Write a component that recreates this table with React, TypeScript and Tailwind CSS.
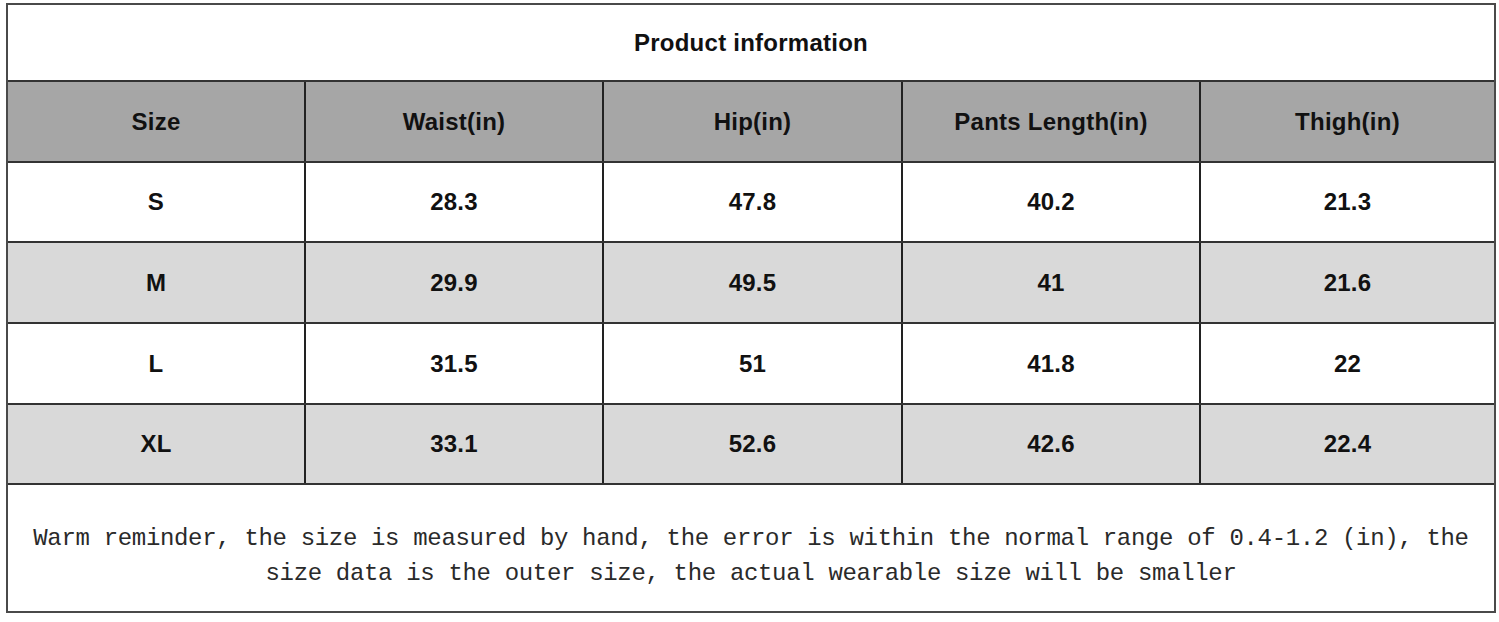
import React from "react";

const headers = ["Size", "Waist(in)", "Hip(in)", "Pants Length(in)", "Thigh(in)"];
const rows = [
  { cells: ["S", "28.3", "47.8", "40.2", "21.3"], bg: "bg-white", h: "h-[80px]" },
  { cells: ["M", "29.9", "49.5", "41", "21.6"], bg: "bg-[#d9d9d9]", h: "h-[81px]" },
  { cells: ["L", "31.5", "51", "41.8", "22"], bg: "bg-white", h: "h-[81px]" },
  { cells: ["XL", "33.1", "52.6", "42.6", "22.4"], bg: "bg-[#d9d9d9]", h: "h-[80px]" },
];

const arial = { fontFamily: '"Liberation Sans", Arial, sans-serif' };

function Row({ cells, className }: { cells: string[]; className: string }) {
  return (
    <div
      className={`grid grid-cols-[298px_298px_299px_298px_1fr] border-b-2 border-[#333] ${className}`}
    >
      {cells.map((c, i) => (
        <div
          key={i}
          className={`flex items-center justify-center text-[24px] font-bold tracking-[0.25px] text-[#111] ${
            i < 4 ? "border-r-2 border-[#222]" : ""
          }`}
          style={arial}
        >
          {c}
        </div>
      ))}
    </div>
  );
}

export default function App() {
  return (
    <div className="w-[1499px] h-[622px] bg-white pt-[3px] pl-[6px]">
      <div className="w-[1490px] border-2 border-[#4a4a4a] bg-white">
        <div
          className="h-[77px] flex items-center justify-center border-b-2 border-[#333] text-[24px] font-bold tracking-[0.25px] text-[#111]"
          style={arial}
        >
          Product information
        </div>
        <Row cells={headers} className="h-[81px] bg-[#a6a6a6]" />
        {rows.map((r, i) => (
          <Row key={i} cells={r.cells} className={`${r.h} ${r.bg}`} />
        ))}
        <div
          className="h-[126px] pt-[36px] text-center text-[24px] tracking-[-0.33px] leading-[35px] text-[#2a2a2a] whitespace-pre"
          style={{ fontFamily: '"Liberation Mono", "Courier New", monospace' }}
        >
          {"Warm reminder, the size is measured by hand, the error is within the normal range of 0.4-1.2 (in), the"}
          <br />
          {"size data is the outer size, the actual wearable size will be smaller"}
        </div>
      </div>
    </div>
  );
}
